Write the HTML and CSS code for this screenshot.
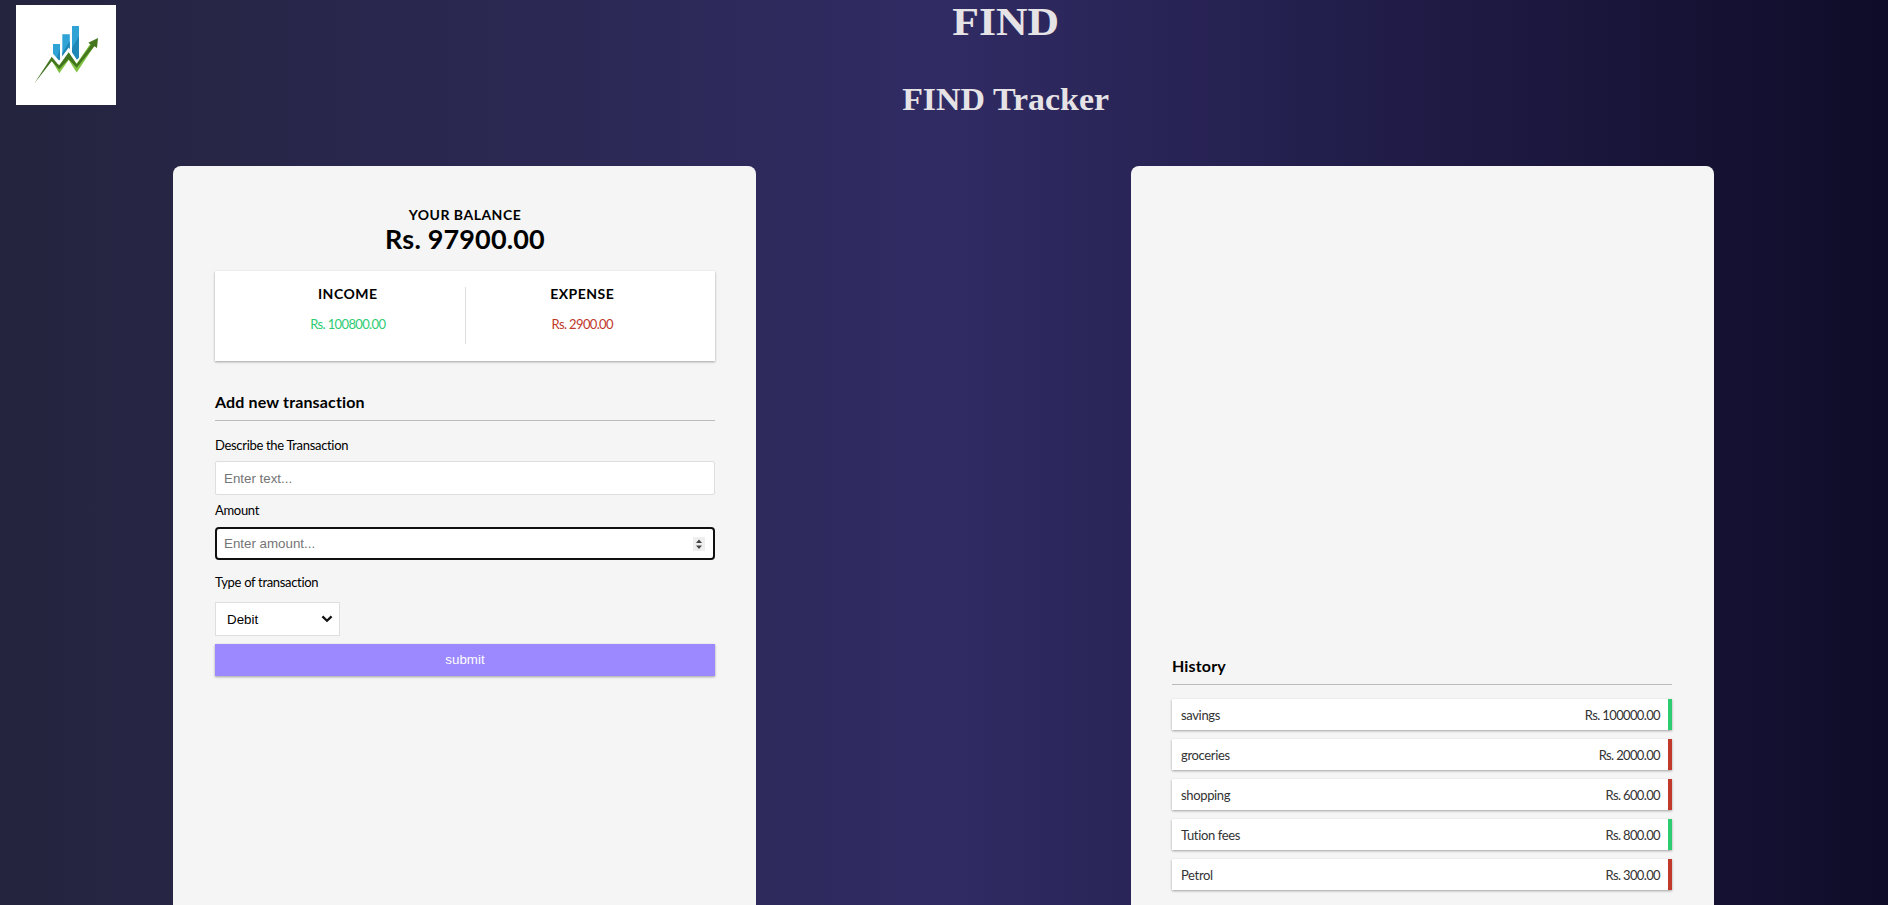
FILE: index.html
```html
<!DOCTYPE html>
<html lang="en">
<head>
<meta charset="utf-8">
<title>FIND Tracker</title>
<link rel="stylesheet" href="styles.css">
</head>
<body>
<header class="header">
  <svg class="logo" viewBox="0 0 100 100" role="img" aria-label="FIND logo">
    <rect width="100" height="100" fill="#fff"/>
    <path fill="#2fa3d6" d="M37 39h7v18h-7zM46.300 29.300h7.500v26h-7.500zM56 21h7v36h-7z"/>
    <path fill="#1f86b8" d="M44 44v14h-5zM53.800 36v14l-7.500 7v-9zM63 31v26h-7v-14z"/>
    <path fill="none" stroke="#fff" stroke-width="3" d="M34 52l1.700-2.500 7.500 8.500 9.500-13 8 12 7-7"/>
    <path fill="#fff" d="M35.700 51.500l7.500 9 9.500-13 8 12v10h-22z"/>
    <path fill="#80c342" d="M36 56l7.300 12.300L52.700 55l8 12.500L79 40l-4.500-1.500L60.700 58.500 52.700 49 43.500 60z"/>
    <path fill="#44751f" d="M18.300 78.500L35.700 51.700l7.300 9 9.700-13.500 8 12L75 39.800l-2.700-2L82 33l-1 10-2.700-1.700-17.600 21.500-8-8.500-9.500 10-7.500-8z"/>
  </svg>
  <div class="titles">
    <h1 class="title"><span>FIND</span></h1>
    <h2 class="subtitle"><span>FIND Tracker</span></h2>
  </div>
</header>
<main class="panels">
  <section class="panel">
    <h4 class="caps">YOUR BALANCE</h4>
    <div class="balance">Rs. 97900.00</div>
    <div class="summary">
      <div class="summary-item">
        <h4 class="caps">INCOME</h4>
        <p class="sum money plus">Rs. 100800.00</p>
      </div>
      <div class="summary-item">
        <h4 class="caps">EXPENSE</h4>
        <p class="sum money minus">Rs. 2900.00</p>
      </div>
    </div>
    <h3 class="heading">Add new transaction</h3>
    <form class="form">
      <label class="label" for="text">Describe the Transaction</label>
      <div class="field"><input id="text" class="input" type="text" placeholder="Enter text..."></div>
      <label class="label label-amount" for="amount">Amount</label>
      <div class="field field-active">
        <input id="amount" class="input" type="text" placeholder="Enter amount...">
        <svg class="spinner" viewBox="0 0 12 14"><path fill="#efefef" d="M0 0h12v14H0z"/><path fill="#444" d="M3 6l3-3.500L9 6zM3 8.500h6L6 12z"/></svg>
      </div>
      <label class="label label-type">Type of transaction</label>
      <div class="select"><span>Debit</span><svg class="chevron" viewBox="0 0 10 7"><path d="M1 1.200l4 3.800 4-3.800" fill="none" stroke="#111" stroke-width="2"/></svg></div>
      <button class="submit" type="button">submit</button>
    </form>
  </section>
  <section class="panel panel-history">
    <h3 class="heading">History</h3>
    <ul class="list">
      <li class="row row-plus"><span>savings</span><span class="money">Rs. 100000.00</span></li>
      <li class="row row-minus"><span>groceries</span><span class="money">Rs. 2000.00</span></li>
      <li class="row row-minus"><span>shopping</span><span class="money">Rs. 600.00</span></li>
      <li class="row row-plus"><span>Tution fees</span><span class="money">Rs. 800.00</span></li>
      <li class="row row-minus"><span>Petrol</span><span class="money">Rs. 300.00</span></li>
    </ul>
  </section>
</main>
</body>
</html>
```
FILE: styles.css
```css
* { box-sizing: border-box; }
body {
  margin: 0;
  height: 905px;
  overflow: hidden;
  font-family: Lato, "Open Sans", sans-serif;
  font-size: 13px;
  color: #000;
  background: linear-gradient(to left, #0f0c29, #302b63, #24243e);
}
h1, h2, h3, h4, p, ul { margin: 0; padding: 0; }
.header { display: flex; height: 166px; padding: 5px 0 0 16px; }
.logo { width: 100px; height: 100px; margin-right: 8px; flex: none; }
.titles { flex: 1; text-align: center; color: #e6e3e6; font-family: "Liberation Serif", serif; }
.title { font-size: 39px; line-height: 44px; margin-top: -5px; }
.title span { display: inline-block; transform: scaleX(1.12); }
.subtitle { font-size: 32px; line-height: 36px; margin-top: 37px; }
.subtitle span { display: inline-block; transform: scaleX(1.06); }
.panels { display: flex; gap: 375px; padding-left: 173px; }
.panel {
  width: 583px;
  height: 739px;
  flex: none;
  padding: 40px 41px 0 42px;
  border-radius: 8px 8px 0 0;
  background: #f5f5f5;
}
.caps { font-size: 14px; line-height: 18px; font-weight: 700; letter-spacing: .5px; text-align: center; }
.balance { font-size: 27px; line-height: 30px; font-weight: 700; letter-spacing: .15px; text-align: center; }
.summary {
  display: flex;
  height: 90px;
  margin-top: 17px;
  padding: 16px;
  background: #fff;
  box-shadow: 0 1px 3px rgba(0, 0, 0, .12), 0 1px 2px rgba(0, 0, 0, .24);
}
.summary-item { flex: 1; height: 57px; }
.summary-item:first-child { border-right: 1px solid #dedede; }
.summary-item .caps { margin-top: -2px; }
.money { letter-spacing: -.64px; }
.sum { margin-top: 11px; text-align: center; line-height: 20px; }
.plus { color: #2ecc71; }
.minus { color: #c0392b; }
.heading { height: 30px; margin-top: 30px; border-bottom: 1px solid #bbb; font-size: 16px; line-height: 22px; letter-spacing: .15px; }
.form { display: flex; flex-direction: column; margin-top: 15px; }
.label { height: 25px; line-height: 18px; letter-spacing: -.32px; }
.field { display: flex; align-items: center; height: 34px; padding: 0 8px; border: 1px solid #dedede; border-radius: 2px; background: #fff; }
.field-active { height: 33px; border: 2px solid #101010; border-radius: 4px; padding: 0 8px 0 7px; }
.input { flex: 1; min-width: 0; padding: 0; border: 0; background: none; font: 13.333px "Liberation Sans", sans-serif; }
.input::placeholder { color: #757575; }
.spinner { width: 12px; height: 14px; }
.label-amount { height: 32px; padding-top: 6px; }
.label-type { height: 42px; padding-top: 13px; }
.select { display: flex; align-items: center; justify-content: space-between; width: 125px; height: 34px; padding: 0 6px 0 11px; border: 1px solid #dedede; background: #fff; font: 13.333px "Liberation Sans", sans-serif; }
.chevron { width: 12px; height: 8px; }
.submit {
  height: 32px;
  margin-top: 8px;
  padding: 0 0 1px;
  border: 0;
  background: #9c88ff;
  color: #fff;
  font: 13.333px "Liberation Sans", sans-serif;
  box-shadow: 0 1px 3px rgba(0, 0, 0, .12), 0 1px 2px rgba(0, 0, 0, .24);
}
.panel-history { padding: 459px 42px 0 41px; }
.list { display: flex; flex-direction: column; gap: 9px; margin-top: 14px; list-style: none; }
.row {
  display: flex;
  align-items: center;
  justify-content: space-between;
  height: 31px;
  padding: 0 8px 0 9px;
  border-right: 4px solid;
  background: #fff;
  box-shadow: 0 1px 3px rgba(0, 0, 0, .12), 0 1px 2px rgba(0, 0, 0, .24);
}
.row span { color: #333; }
.row span:first-child { letter-spacing: -.35px; }
.row-plus { border-right-color: #2ecc71; }
.row-minus { border-right-color: #c0392b; }
```
